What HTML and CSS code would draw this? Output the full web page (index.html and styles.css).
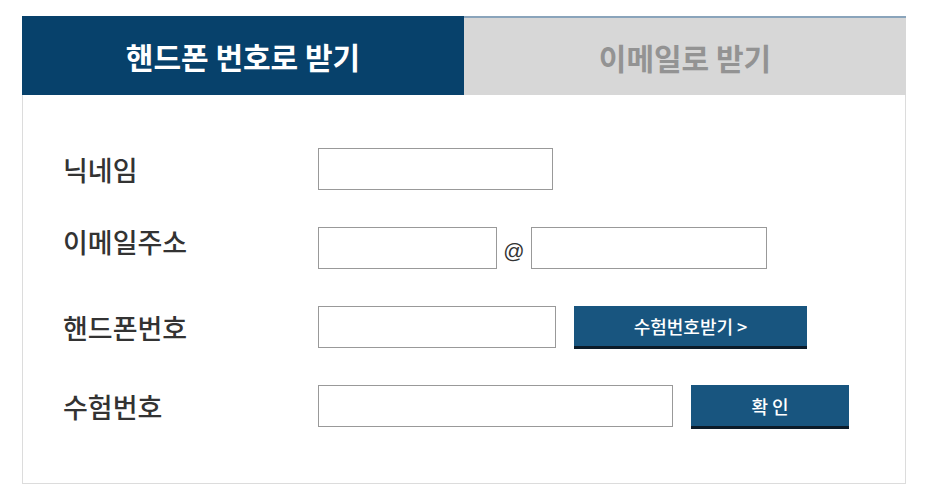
FILE: index.html
```html
<!DOCTYPE html>
<html>
<head>
  <title>수험번호 찾기</title>
  <link rel="stylesheet" href="styles.css">
</head>
<body>
  <div class="container">
    <div class="tabs">
      <div class="tab active">핸드폰 번호로 받기</div>
      <div class="tab">이메일로 받기</div>
    </div>
    <form class="find-form" action="#">
      <div class="form-row">
        <label for="nick">닉네임</label>
        <input type="text" id="nick" class="w-nick">
      </div>
      <div class="form-row">
        <label for="mail1" class="label-up">이메일주소</label>
        <input type="text" id="mail1" class="w-mail1">
        <span class="at">@</span>
        <input type="text" id="mail2" class="w-mail2">
      </div>
      <div class="form-row">
        <label for="phone">핸드폰번호</label>
        <input type="tel" id="phone" class="w-phone">
        <button type="button" class="btn w-send">수험번호받기 &gt;</button>
      </div>
      <div class="form-row">
        <label for="code">수험번호</label>
        <input type="text" id="code" class="w-code">
        <button type="button" class="btn w-ok">확 인</button>
      </div>
    </form>
  </div>
</body>
</html>
```

FILE: styles.css
```css
body {
  margin: 0;
  background-color: #fff;
  font-family: "Noto Sans CJK KR", "Noto Sans", sans-serif;
}

.container {
  width: 882px;
  height: 467px;
  margin: 16px 0 0 22px;
  border: 1px solid #dcdcdc;
  border-top: none;
}

.tabs {
  display: flex;
  height: 79px;
  margin-left: -1px;
  margin-right: -1px;
}

.tab {
  flex: 1;
  display: flex;
  align-items: center;
  justify-content: center;
  font-size: 30px;
  font-weight: bold;
  background-color: #d7d7d7;
  color: #939393;
  border-top: 2px solid #8aa4bb;
  box-sizing: border-box;
}

.tab.active {
  flex: 0 0 442px;
  background-color: #07416b;
  color: #fff;
  border-top: none;
}

.find-form {
  display: flex;
  flex-direction: column;
  gap: 37px;
  padding: 53px 0 0 40px;
}

.form-row {
  display: flex;
  align-items: center;
  height: 42px;
}

.form-row label {
  width: 255px;
  font-size: 27px;
  font-weight: 500;
  color: #333;
}

.form-row label.label-up {
  margin-top: -14px;
}

.form-row input {
  height: 42px;
  box-sizing: border-box;
  border: 1px solid #999;
  margin: 0;
  padding: 0 8px;
}

.at {
  width: 34px;
  text-align: center;
  font-family: "Liberation Sans", sans-serif;
  font-size: 21px;
  color: #333;
  padding-top: 6px;
}

.btn {
  align-self: flex-start;
  height: 43px;
  margin-left: 18px;
  border: none;
  border-bottom: 3px solid #0b1b29;
  background-color: #18557f;
  color: #fff;
  font-family: "Noto Sans CJK KR", "Noto Sans", sans-serif;
  font-size: 18px;
  font-weight: 500;
  cursor: pointer;
}

.w-nick { width: 235px; }
.w-mail1 { width: 179px; }
.w-mail2 { width: 236px; }
.w-phone { width: 238px; }
.w-send { width: 233px; }
.w-code { width: 355px; }
.w-ok { width: 158px; height: 44px; }
```
